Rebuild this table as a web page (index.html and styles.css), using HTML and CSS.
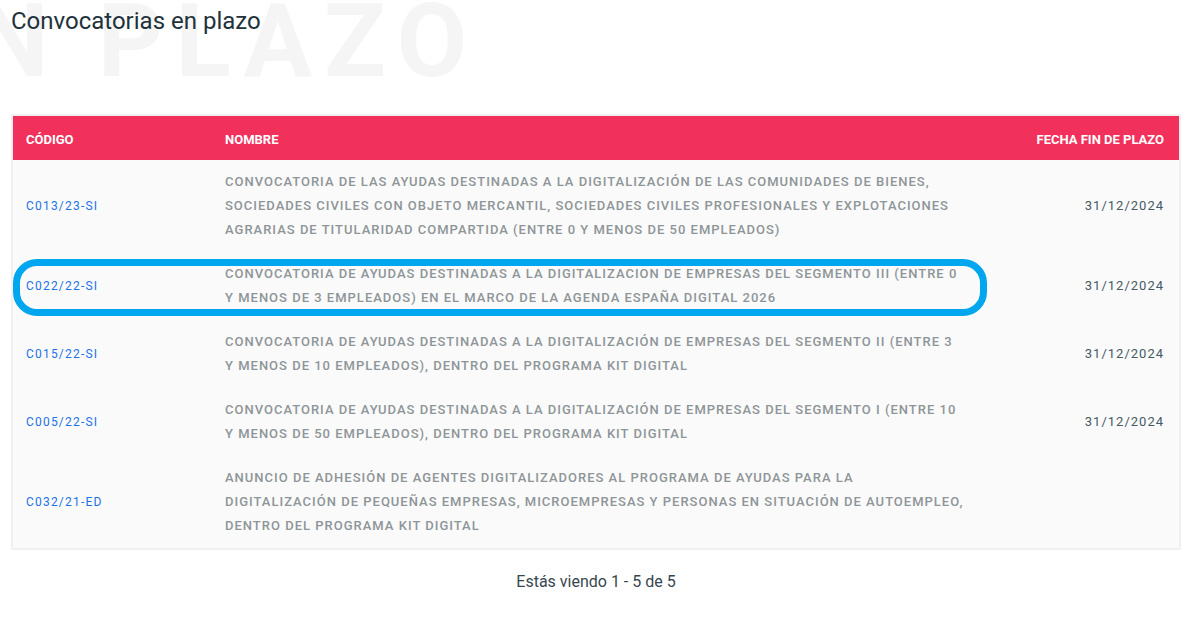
FILE: index.html
```html
<!DOCTYPE html>
<html lang="es">
<head>
<meta charset="utf-8">
<title>Convocatorias en plazo</title>
<link rel="stylesheet" href="styles.css">
</head>
<body>
<div class="page">
  <div class="watermark" aria-hidden="true">EN PLAZO</div>
  <h1 class="title">Convocatorias en plazo</h1>
  <div class="table-wrap">
    <table class="calls">
      <thead>
        <tr>
          <th class="col-code">CÓDIGO</th>
          <th class="col-name">NOMBRE</th>
          <th class="col-date">FECHA FIN DE PLAZO</th>
        </tr>
      </thead>
      <tbody>
        <tr>
          <td class="col-code"><a href="#">C013/23-SI</a></td>
          <td class="col-name">CONVOCATORIA DE LAS AYUDAS DESTINADAS A LA DIGITALIZACIÓN DE LAS COMUNIDADES DE BIENES,<br>SOCIEDADES CIVILES CON OBJETO MERCANTIL, SOCIEDADES CIVILES PROFESIONALES Y EXPLOTACIONES<br>AGRARIAS DE TITULARIDAD COMPARTIDA (ENTRE 0 Y MENOS DE 50 EMPLEADOS)</td>
          <td class="col-date">31/12/2024</td>
        </tr>
        <tr class="marked">
          <td class="col-code"><a href="#">C022/22-SI</a></td>
          <td class="col-name">CONVOCATORIA DE AYUDAS DESTINADAS A LA DIGITALIZACION DE EMPRESAS DEL SEGMENTO III (ENTRE 0<br>Y MENOS DE 3 EMPLEADOS) EN EL MARCO DE LA AGENDA ESPAÑA DIGITAL 2026</td>
          <td class="col-date">31/12/2024</td>
        </tr>
        <tr>
          <td class="col-code"><a href="#">C015/22-SI</a></td>
          <td class="col-name">CONVOCATORIA DE AYUDAS DESTINADAS A LA DIGITALIZACIÓN DE EMPRESAS DEL SEGMENTO II (ENTRE 3<br>Y MENOS DE 10 EMPLEADOS), DENTRO DEL PROGRAMA KIT DIGITAL</td>
          <td class="col-date">31/12/2024</td>
        </tr>
        <tr>
          <td class="col-code"><a href="#">C005/22-SI</a></td>
          <td class="col-name">CONVOCATORIA DE AYUDAS DESTINADAS A LA DIGITALIZACIÓN DE EMPRESAS DEL SEGMENTO I (ENTRE 10<br>Y MENOS DE 50 EMPLEADOS), DENTRO DEL PROGRAMA KIT DIGITAL</td>
          <td class="col-date">31/12/2024</td>
        </tr>
        <tr>
          <td class="col-code"><a href="#">C032/21-ED</a></td>
          <td class="col-name">ANUNCIO DE ADHESIÓN DE AGENTES DIGITALIZADORES AL PROGRAMA DE AYUDAS PARA LA<br>DIGITALIZACIÓN DE PEQUEÑAS EMPRESAS, MICROEMPRESAS Y PERSONAS EN SITUACIÓN DE AUTOEMPLEO,<br>DENTRO DEL PROGRAMA KIT DIGITAL</td>
          <td class="col-date"></td>
        </tr>
      </tbody>
    </table>
    <div class="highlight" aria-hidden="true"></div>
  </div>
  <p class="pager">Estás viendo 1 - 5 de 5</p>
</div>
</body>
</html>
```

FILE: styles.css
```css
* { box-sizing: border-box; }

html, body {
  margin: 0;
  padding: 0;
  background: #ffffff;
}

body {
  font-family: Roboto, "Liberation Sans", sans-serif;
  color: #263238;
}

.page {
  position: relative;
  padding: 0 22px 0 11px;
  overflow: hidden;
  min-height: 642px;
}

.watermark {
  position: absolute;
  left: -93px;
  top: -18px;
  font-size: 102px;
  font-weight: 700;
  letter-spacing: 12px;
  color: #f5f5f5;
  white-space: nowrap;
  line-height: 1.17;
  z-index: 0;
  pointer-events: none;
}

.title {
  position: relative;
  z-index: 1;
  margin: 0;
  padding-top: 7px;
  height: 114px;
  font-size: 24px;
  font-weight: 400;
  line-height: 28px;
  color: #22323a;
}

.table-wrap {
  position: relative;
  z-index: 1;
  border: 2px solid #f0f0f0;
  background: #fafafa;
}

.calls {
  width: 100%;
  border-collapse: collapse;
}

.calls th {
  background: #f2305c;
  color: #ffffff;
  font-size: 13px;
  font-weight: 700;
  height: 44px;
  padding: 2px 13px 0;
  text-align: left;
  vertical-align: middle;
}

.calls th.col-date,
.calls td.col-date {
  text-align: right;
  padding-right: 15px;
}

.calls td {
  padding: 10px 13px;
  vertical-align: middle;
  font-size: 13px;
  line-height: 24px;
  letter-spacing: 1px;
}

.col-code { width: 199px; }

.calls td.col-code a {
  color: #1a73e8;
  text-decoration: none;
  font-size: 12px;
  letter-spacing: 1.2px;
}

.calls td.col-name {
  color: #8e9598;
  font-weight: 500;
}

.calls td.col-date {
  color: #455a64;
  white-space: nowrap;
}

.highlight {
  position: absolute;
  left: 0;
  top: 143px;
  width: 974px;
  height: 57px;
  border: 7px solid #00a6ee;
  border-radius: 24px;
  pointer-events: none;
}

.pager {
  margin: 20px 0 0;
  text-align: center;
  font-size: 16px;
  line-height: 24px;
  color: #37474f;
}
```
